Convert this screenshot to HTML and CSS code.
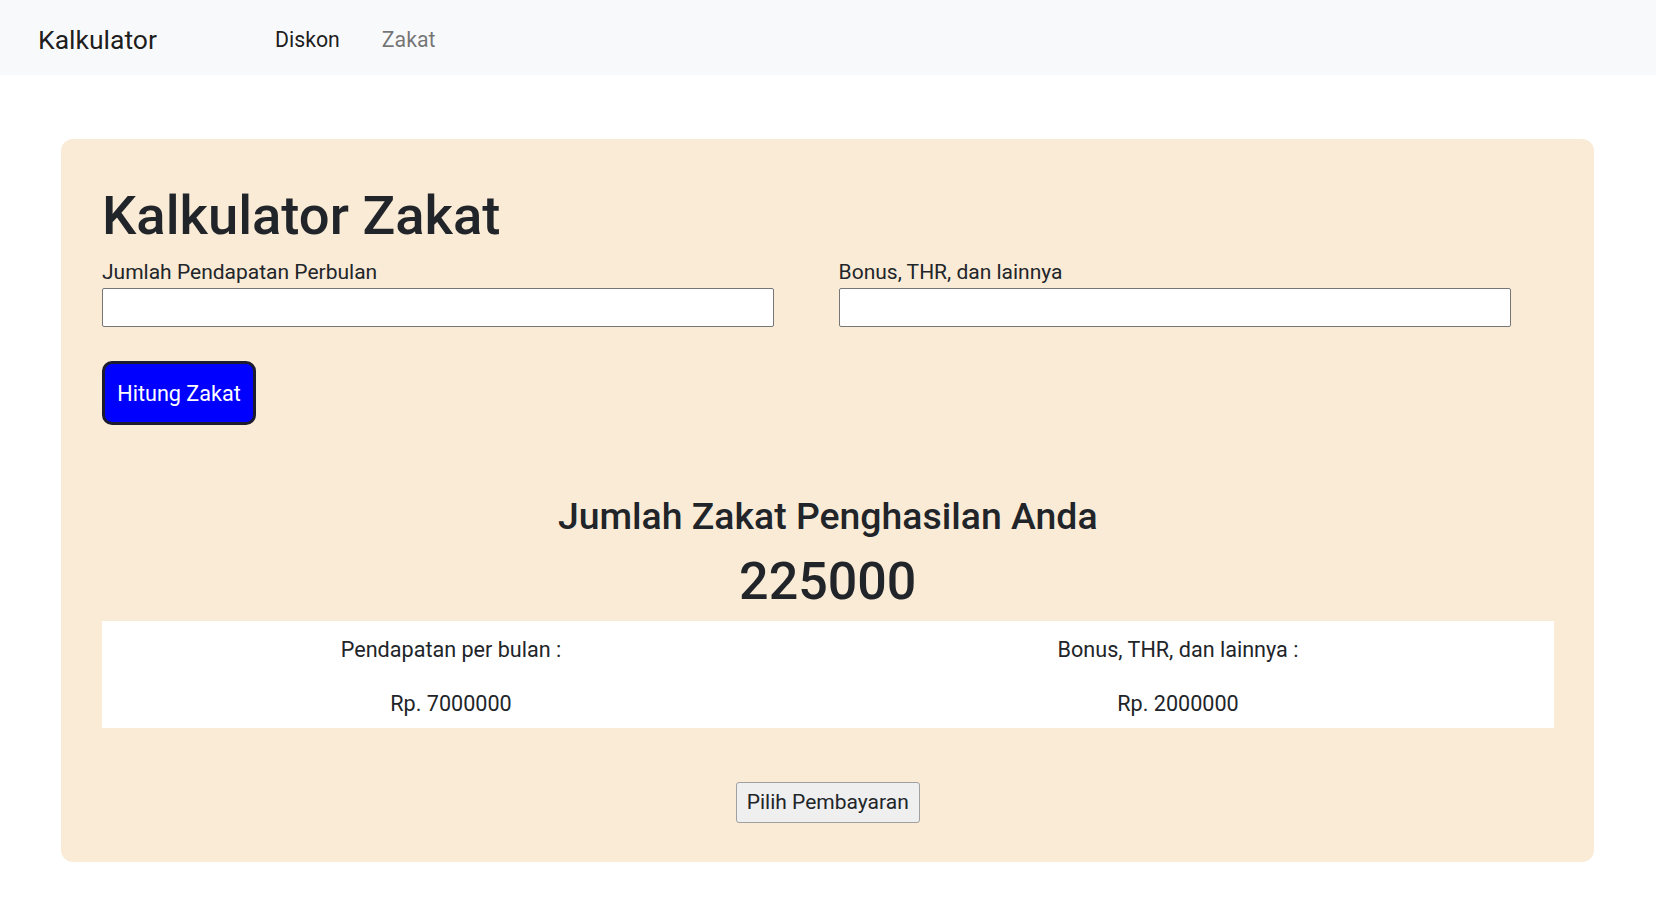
FILE: index.html
```html
<!DOCTYPE html>
<html lang="id">
<head>
<meta charset="utf-8">
<title>Kalkulator Zakat</title>
<link rel="stylesheet" href="styles.css">
</head>
<body>
<nav class="navbar">
  <a class="brand" href="#">Kalkulator</a>
  <div class="nav-links">
    <a class="nav-link active" href="#">Diskon</a>
    <a class="nav-link" href="#">Zakat</a>
  </div>
</nav>
<main class="card">
  <h1 class="title">Kalkulator Zakat</h1>
  <div class="fields">
    <div class="field">
      <label class="label" for="gaji">Jumlah Pendapatan Perbulan</label>
      <input class="input" id="gaji" type="text">
    </div>
    <div class="field">
      <label class="label" for="bonus">Bonus, THR, dan lainnya</label>
      <input class="input" id="bonus" type="text">
    </div>
  </div>
  <button class="btn-hitung" type="button">Hitung Zakat</button>
  <h2 class="result-title">Jumlah Zakat Penghasilan Anda</h2>
  <div class="result-amount">225000</div>
  <div class="summary">
    <div class="summary-grid">
      <p class="cell">Pendapatan per bulan :</p>
      <p class="cell">Bonus, THR, dan lainnya :</p>
      <p class="cell">Rp. 7000000</p>
      <p class="cell">Rp. 2000000</p>
    </div>
  </div>
  <div class="pay-row">
    <button class="btn-pay" type="button">Pilih Pembayaran</button>
  </div>
</main>
</body>
</html>
```
FILE: styles.css
```css
* { box-sizing: border-box; }
html, body { margin: 0; padding: 0; background: #ffffff; }
body {
  font-family: "Segoe UI", Roboto, "Liberation Sans", sans-serif;
  font-size: 21.6px;
  line-height: 1.5;
  color: #212529;
}
.navbar {
  height: 75px;
  background: #f8f9fa;
  display: flex;
  align-items: center;
  padding: 5px 0 0 38px;
}
.brand {
  flex: 0 0 237px;
  font-size: 26.5px;
  color: rgba(0, 0, 0, 0.9);
  text-decoration: none;
  line-height: 1.5;
}
.nav-links { display: flex; gap: 42px; }
.nav-link {
  color: rgba(0, 0, 0, 0.55);
  text-decoration: none;
  font-size: 21.3px;
}
.nav-link.active { color: rgba(0, 0, 0, 0.9); }

.card {
  margin: 64px 62px 0 61px;
  padding: 45px 40.5px 39px 41px;
  background: #faebd7;
  border-radius: 12px;
}
.title {
  margin: 0 0 7.6px;
  font-size: 54.4px;
  line-height: 64.8px;
  font-weight: 500;
}
.fields {
  display: grid;
  grid-template-columns: 672px 672px;
  column-gap: 64.6px;
}
.label {
  display: block;
  line-height: 32px;
  font-size: 21px;
}
.input {
  display: block;
  width: 672px;
  height: 39px;
  border: 1px solid #767676;
  border-radius: 2px;
  background: #fff;
  font: inherit;
}
.btn-hitung {
  display: block;
  margin-top: 34px;
  width: 154px;
  height: 63.5px;
  background: #0000ff;
  color: #fff;
  border: 3px solid #1c1c2e;
  border-radius: 10px;
  font-family: inherit;
  font-size: 21.6px;
  padding: 0;
}
.result-title {
  margin: 69.5px 0 0;
  text-align: center;
  font-size: 37.4px;
  line-height: 44.4px;
  font-weight: 500;
}
.result-amount {
  margin: 12.6px 0 7px;
  text-align: center;
  font-size: 52px;
  line-height: 62.4px;
  font-weight: 500;
}
.summary {
  background: #fff;
  padding: 13px 0 7px;
}
.summary-grid {
  display: grid;
  grid-template-columns: 727px 727px;
  row-gap: 22px;
  margin-left: -14.5px;
}
.cell {
  margin: 0;
  text-align: center;
  line-height: 32.4px;
}
.pay-row {
  margin-top: 54px;
  display: flex;
  justify-content: center;
}
.btn-pay {
  height: 41px;
  padding: 0 10px;
  background: #efefef;
  border: 1px solid #a0a0a0;
  border-radius: 3px;
  font-family: inherit;
  font-size: 21px;
  color: #212529;
}
```
